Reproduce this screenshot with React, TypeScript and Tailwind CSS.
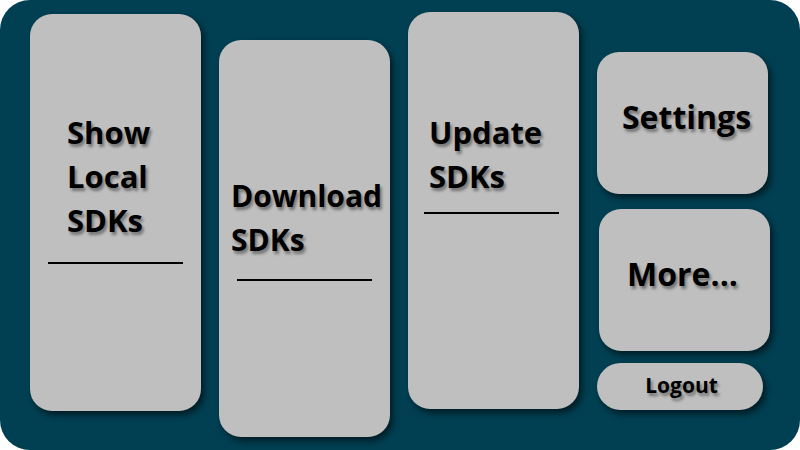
import React from 'react';

const cardBase =
    'bg-[#bfbfbf] rounded-[22px] shadow-[3px_4px_6px_rgba(0,0,0,0.55)] shrink-0';
const label =
    "font-['Open_Sans',sans-serif] font-bold text-black [text-shadow:2px_3px_3px_rgba(0,0,0,0.4)]";

const App: React.FC = () => {
    return (
        <div className="w-[800px] h-[450px] bg-white">
            <div className="w-full h-full bg-[#013f52] rounded-[30px] flex pl-[30px] gap-[18px] overflow-hidden">
                {/* Show Local SDKs */}
                <div className={`${cardBase} w-[171px] h-[397px] mt-[14px] pt-[96px]`}>
                    <div className={`${label} text-[31px] leading-[44px] pl-[37px]`}>
                        Show<br />Local<br />SDKs
                    </div>
                    <div className="mt-[20px] ml-[18px] w-[135px] h-[2px] bg-black" />
                </div>

                {/* Download SDKs */}
                <div className={`${cardBase} w-[171px] h-[397px] mt-[40px] pt-[134px]`}>
                    <div className={`${label} text-[30px] leading-[44px] pl-[12px] whitespace-nowrap`}>
                        Download<br />SDKs
                    </div>
                    <div className="mt-[17px] ml-[18px] w-[135px] h-[2px] bg-black" />
                </div>

                {/* Update SDKs */}
                <div className={`${cardBase} w-[171px] h-[397px] mt-[12px] pt-[98px]`}>
                    <div className={`${label} text-[31px] leading-[44px] pl-[21px]`}>
                        Update<br />SDKs
                    </div>
                    <div className="mt-[14px] ml-[16px] w-[135px] h-[2px] bg-black" />
                </div>

                {/* Right column */}
                <div className="flex flex-col">
                    <div className={`${cardBase} w-[171px] h-[142px] mt-[52px] flex items-center justify-center`}>
                        <span className={`${label} text-[32px] leading-none ml-[8px] mb-[12px]`}>Settings</span>
                    </div>
                    <div className={`${cardBase} w-[171px] h-[142px] mt-[15px] ml-[2px] flex items-center justify-center`}>
                        <span className={`${label} text-[32px] leading-none mr-[4px] mb-[12px]`}>More...</span>
                    </div>
                    <div className={`${cardBase} w-[166px] h-[47px] mt-[12px] rounded-full flex items-center justify-center`}>
                        <span className={`${label} text-[21px] leading-none ml-[3px] mb-[3px]`}>Logout</span>
                    </div>
                </div>
            </div>
        </div>
    );
};

export default App;
